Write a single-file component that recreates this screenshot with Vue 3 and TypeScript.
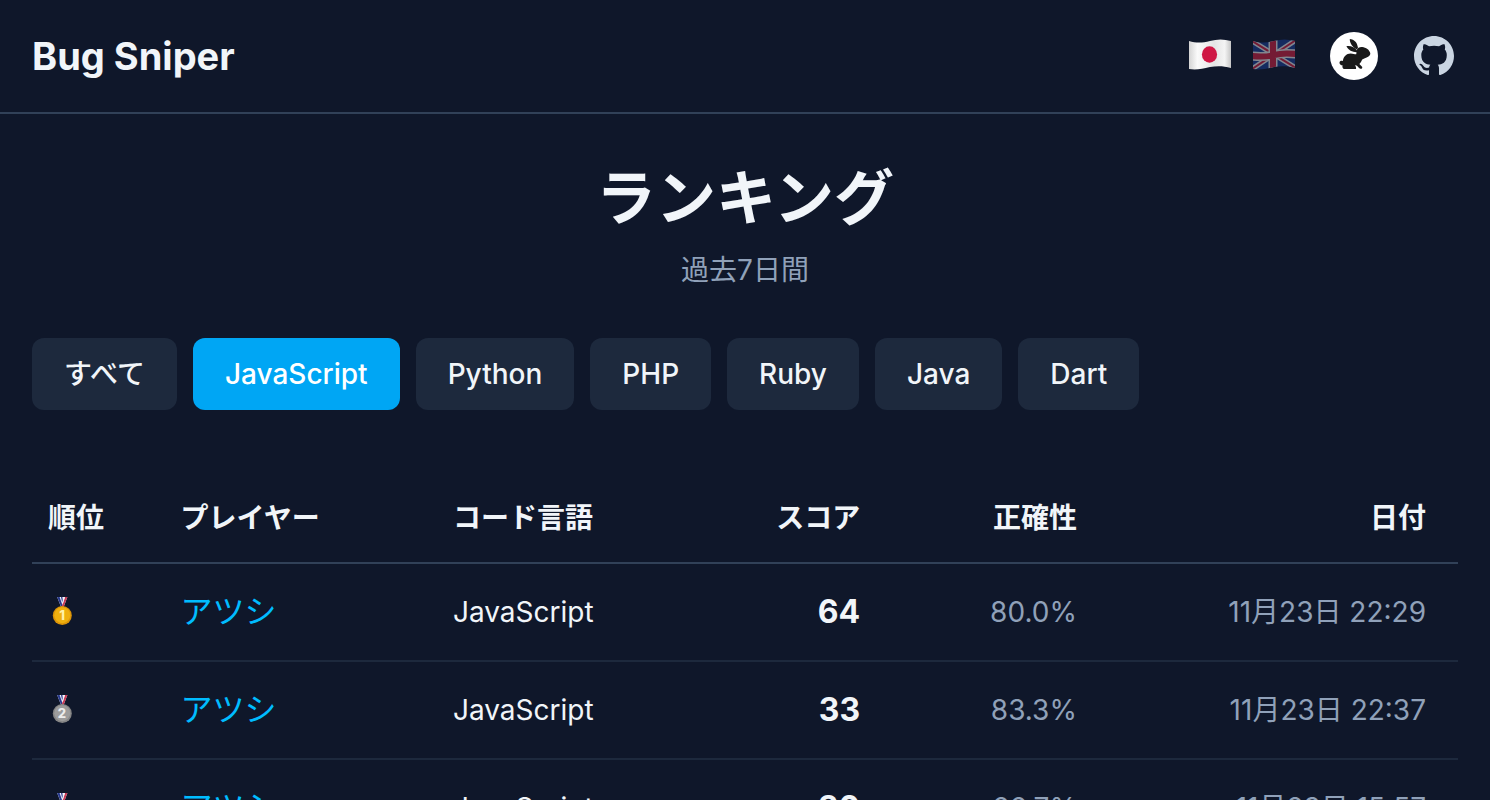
<script setup lang="ts">
import { ref } from 'vue'

interface Entry {
  rank: number
  player: string
  language: string
  score: number
  accuracy: string
  date: string
}

const filters: string[] = ['すべて', 'JavaScript', 'Python', 'PHP', 'Ruby', 'Java', 'Dart']
const active = ref('JavaScript')

const entries: Entry[] = [
  { rank: 1, player: 'アツシ', language: 'JavaScript', score: 64, accuracy: '80.0%', date: '11月23日 22:29' },
  { rank: 2, player: 'アツシ', language: 'JavaScript', score: 33, accuracy: '83.3%', date: '11月23日 22:37' },
  { rank: 3, player: 'アツシ', language: 'JavaScript', score: 30, accuracy: '66.7%', date: '11月23日 15:57' },
]
</script>

<template>
  <div class="page">
    <header class="top">
      <a class="brand" href="#">Bug Sniper</a>
      <nav class="links">
        <div class="langs">
          <button class="flag" type="button" aria-label="日本語">
            <svg viewBox="0 0 44 34" aria-hidden="true">
              <defs>
                <linearGradient id="cloth" x1="0" x2="1" y1="0" y2="0">
                  <stop offset="0" stop-color="#d4d4d4" />
                  <stop offset="0.2" stop-color="#fafafa" />
                  <stop offset="0.6" stop-color="#e4e4e4" />
                  <stop offset="0.85" stop-color="#f4f4f4" />
                  <stop offset="1" stop-color="#c6c6c6" />
                </linearGradient>
              </defs>
              <path d="M1 3C8 5 14 5 22 3C29 1 36 1 43 3V30C36 28 29 28 22 29C14 31 8 32 1 31Z" fill="url(#cloth)" />
              <ellipse cx="21.5" cy="16.5" rx="7.6" ry="8.2" fill="#cf1744" />
            </svg>
          </button>
          <button class="flag dim" type="button" aria-label="English">
            <svg viewBox="0 0 44 34" aria-hidden="true">
              <defs>
                <clipPath id="wave">
                  <path d="M1 3C8 5 14 5 22 3C29 1 36 1 43 3V30C36 28 29 28 22 29C14 31 8 32 1 31Z" />
                </clipPath>
              </defs>
              <g clip-path="url(#wave)" fill="none">
                <path d="M0 0H44V34H0Z" fill="#1b3f96" />
                <path d="M0 3L44 30M0 31L44 2" stroke="#f2f2f2" stroke-width="5" />
                <path d="M0 3L44 30M0 31L44 2" stroke="#d8203f" stroke-width="2" />
                <path d="M21 0V34M0 18C8 19 14 19 22 17C29 15 36 15 44 16" stroke="#f2f2f2" stroke-width="9" />
                <path d="M21 0V34M0 18C8 19 14 19 22 17C29 15 36 15 44 16" stroke="#d8203f" stroke-width="6" />
              </g>
            </svg>
          </button>
        </div>
        <a class="rabbit" href="#" aria-label="ブログ">
          <svg viewBox="0 0 48 48" aria-hidden="true">
            <circle cx="24" cy="24" r="24" fill="#fff" />
            <g fill="#191919">
              <path d="M19.8 7C23.2 7.2 26.1 9.5 27.1 12.4C27.6 13.7 27.7 14.7 28 15.8L26.8 17.4C22.6 15.2 19.6 11.2 19.8 7Z" />
              <path d="M16.4 14.3C20.2 13.3 24.8 15.4 27 18.4L27 20.2C22.8 20.4 18.3 18.3 16.4 14.3Z" />
              <path
                d="M26.8 18C27.4 16 29.6 14.9 32.2 15.1C36 15.4 39.5 18 40.3 21.3C40.6 23.2 38.8 24.8 36.6 25.6C35 26.2 33.4 26.7 32.2 27.5C31.5 29.2 30.6 30.7 29.4 31.9C30.2 33.2 31.6 33.8 32.2 35C32.5 36.2 31.7 37 30.5 36.7C28.7 36.2 27.9 34.4 26.5 33.4L24.8 33.3C25.8 34.3 26.4 35.5 26 37H13.7C12.5 36.2 12.2 34.9 12.5 33.3C10.8 33.3 9.4 32.2 9.5 30.4C9.6 28.9 11.5 28.2 12.9 29.1C13.3 24.6 16.4 21.5 20.6 21.4C23.1 21.4 25 22.3 26.2 22.2C26.6 21.2 26.4 19.6 26.8 18Z"
              />
            </g>
          </svg>
        </a>
        <a class="github" href="#" aria-label="GitHub">
          <svg viewBox="0 0 16 16" aria-hidden="true">
            <path
              fill="currentColor"
              d="M8 0C3.58 0 0 3.58 0 8c0 3.54 2.29 6.53 5.47 7.59.4.07.55-.17.55-.38 0-.19-.01-.82-.01-1.49-2.01.37-2.53-.49-2.69-.94-.09-.23-.48-.94-.82-1.13-.28-.15-.68-.52-.01-.53.63-.01 1.08.58 1.23.82.72 1.21 1.87.87 2.33.66.07-.52.28-.87.51-1.07-1.78-.2-3.64-.89-3.64-3.95 0-.87.31-1.59.82-2.15-.08-.2-.36-1.02.08-2.12 0 0 .67-.21 2.2.82.64-.18 1.32-.27 2-.27s1.36.09 2 .27c1.53-1.04 2.2-.82 2.2-.82.44 1.1.16 1.92.08 2.12.51.56.82 1.27.82 2.15 0 3.07-1.87 3.75-3.65 3.95.29.25.54.73.54 1.48 0 1.07-.01 1.93-.01 2.2 0 .21.15.46.55.38A8.01 8.01 0 0 0 16 8c0-4.42-3.58-8-8-8Z"
            />
          </svg>
        </a>
      </nav>
    </header>

    <main class="content">
      <div class="heading">
        <h1>ランキング</h1>
        <p>過去7日間</p>
      </div>

      <div class="filters">
        <button
          v-for="name in filters"
          :key="name"
          type="button"
          :class="{ active: name === active }"
          :aria-pressed="name === active"
          @click="active = name"
        >
          {{ name }}
        </button>
      </div>

      <table>
        <colgroup>
          <col class="c-rank" />
          <col class="c-player" />
          <col class="c-language" />
          <col class="c-score" />
          <col class="c-accuracy" />
          <col />
        </colgroup>
        <thead>
          <tr>
            <th scope="col">順位</th>
            <th scope="col">プレイヤー</th>
            <th scope="col">コード言語</th>
            <th scope="col" class="num">スコア</th>
            <th scope="col" class="num">正確性</th>
            <th scope="col" class="num">日付</th>
          </tr>
        </thead>
        <tbody>
          <tr v-for="entry in entries" :key="entry.rank">
            <td>
              <svg class="medal" :class="'medal-' + entry.rank" viewBox="0 0 28 32" role="img" :aria-label="entry.rank + '位'">
                <path d="M9.2 1H19.4L15.6 11H13Z" fill="#f3f3fa" />
                <path d="M9.2 1H11.6L14.4 9L13.2 11Z" fill="#283a8e" />
                <path d="M13 1H14.4L14.8 5L14.2 6.6Z" fill="#283a8e" />
                <path d="M17 1H19.4L15.6 11H13.6Z" fill="#c83a55" />
                <path d="M15.8 1H17L14.8 8L14.3 6.6Z" fill="#f3f3fa" />
                <circle class="rim" cx="14.3" cy="19.5" r="9.5" />
                <circle class="face" cx="14.3" cy="19.2" r="8" />
                <text class="digit" x="14" y="24" text-anchor="middle">{{ entry.rank }}</text>
              </svg>
            </td>
            <td><a class="player" href="#">{{ entry.player }}</a></td>
            <td>{{ entry.language }}</td>
            <td class="num score">{{ entry.score }}</td>
            <td class="num muted">{{ entry.accuracy }}</td>
            <td class="num muted">{{ entry.date }}</td>
          </tr>
        </tbody>
      </table>
    </main>
  </div>
</template>

<style>
html,
body {
  background: #0f172a;
}

body {
  margin: 0;
}
</style>

<style scoped>
.page {
  height: 100vh;
  overflow: hidden;
  background: #0f172a;
  color: #f1f5f9;
  font-family: Inter, 'Noto Sans CJK JP', sans-serif;
  font-size: 28px;
  line-height: 40px;
}

.top {
  display: flex;
  align-items: center;
  justify-content: space-between;
  height: 112px;
  padding: 0 32px;
  border-bottom: 2px solid #314158;
}

.brand {
  color: inherit;
  font-size: 38px;
  font-weight: 700;
  text-decoration: none;
}

.links {
  display: flex;
  align-items: center;
  gap: 32px;
}

.langs {
  display: flex;
  gap: 20px;
  padding: 0 2px 2px 0;
}

.flag {
  width: 44px;
  height: 34px;
  padding: 0;
  border: 0;
  background: none;
}

.dim {
  opacity: 0.5;
}

svg {
  display: block;
}

.flag svg {
  width: 44px;
  height: 34px;
}

.rabbit svg {
  width: 48px;
  height: 48px;
}

.github {
  padding: 4px;
  color: #cad5e2;
}

.github svg {
  width: 40px;
  height: 40px;
}

.content {
  padding: 48px 32px;
}

.heading {
  text-align: center;
}

h1 {
  margin: 0;
  font-size: 60px;
  font-weight: 700;
  line-height: 72px;
}

.heading p {
  margin: 16px 0 0;
  color: #90a1b9;
}

.filters {
  display: flex;
  flex-wrap: wrap;
  gap: 16px;
  margin-top: 48px;
}

.filters button {
  padding: 16px 32px;
  border: 0;
  border-radius: 12px;
  background: #1d293d;
  color: #f1f5f9;
  font: inherit;
  font-weight: 500;
}

.filters .active {
  background: #00a6f4;
  color: #fff;
}

table {
  width: 100%;
  margin-top: 64px;
  border-collapse: collapse;
  table-layout: fixed;
}

.c-rank {
  width: 9.3%;
}

.c-player {
  width: 19.1%;
}

.c-language {
  width: 20%;
}

.c-score {
  width: 10.8%;
}

.c-accuracy {
  width: 15.2%;
}

th,
td {
  padding: 0 16px;
  text-align: left;
}

th {
  height: 88px;
  border-bottom: 2px solid #314158;
  font-weight: 700;
}

td {
  height: 96px;
  border-bottom: 2px solid #1d293d;
}

th:last-child,
td:last-child {
  padding-right: 32px;
}

.num {
  text-align: right;
}

.score {
  font-size: 32px;
  font-weight: 700;
}

.muted {
  color: #90a1b9;
}

.player {
  color: #00bcff;
  font-size: 32px;
  text-decoration: none;
}

.medal {
  width: 28px;
  height: 32px;
}

.rim {
  fill: #dc9408;
}

.face {
  fill: #efb00f;
}

.digit {
  fill: #fff2a8;
  font-size: 13px;
  font-weight: 800;
}

.medal-2 .rim {
  fill: #858585;
}

.medal-2 .face {
  fill: #9c9c9c;
}

.medal-2 .digit {
  fill: #ececec;
}

.medal-3 .rim {
  fill: #96532a;
}

.medal-3 .face {
  fill: #b96d3c;
}

.medal-3 .digit {
  fill: #f3c9a4;
}
</style>
